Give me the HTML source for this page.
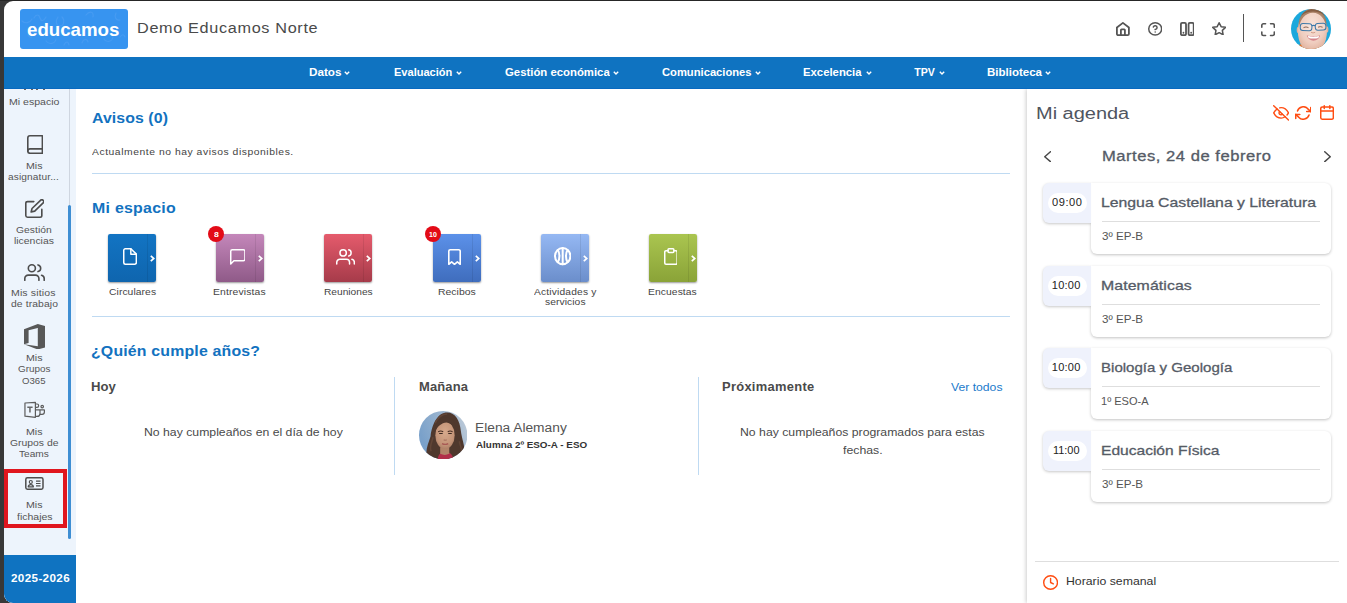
<!DOCTYPE html>
<html lang="es">
<head>
<meta charset="utf-8">
<title>Educamos</title>
<style>
*{box-sizing:border-box;margin:0;padding:0}
html,body{width:1347px;height:603px;overflow:hidden;background:#383838;font-family:"Liberation Sans",sans-serif;color:#4a4a4a}
.abs{position:absolute}
#win{position:absolute;left:4px;top:1px;width:1343px;height:602px;background:#fff;border-radius:9px 0 0 9px;overflow:hidden}
#logo{position:absolute;left:16px;top:8px;width:108px;height:40px;background:#3794f0;border-radius:3px;overflow:hidden}
#nav{position:absolute;left:0;top:56px;width:1343px;height:32px;background:#0f73c1;border-bottom:1px solid #0869c0}
.chev{position:absolute;top:70px;width:6px;height:4px;fill:none;stroke:#fff;stroke-width:1.400}
#side{position:absolute;left:0;top:88px;width:72px;height:514px;background:#edf4fc}
#side .trk{position:absolute;left:65px;top:0;width:1px;height:117px;background:#cfd6e0}
#side .thumb{position:absolute;left:64px;top:116px;width:3px;height:334px;background:#3e8ed3;border-radius:1.500px}
#year{position:absolute;left:0;top:466px;width:72px;height:48px;background:#0f73c1}
.ic{fill:none;stroke:#4d4d4d;stroke-width:1.700;stroke-linecap:round;stroke-linejoin:round}
.redbox{position:absolute;left:0;top:380px;width:63px;height:59px;border:4px solid #e0161e}
.hr{position:absolute;height:1px;background:#bfdaf2}
.tile{position:absolute;top:233px;width:48px;height:48px;border-radius:2px;box-shadow:0 1px 2px rgba(0,0,0,.4)}
.tile i{position:absolute;left:39px;top:0;width:1px;height:48px;background:rgba(0,0,0,.08)}
.tile .cv{position:absolute;left:42px;top:21px;width:5px;height:7px;fill:none;stroke:#fff;stroke-width:1.700}
.wi{position:absolute;fill:none;stroke:#fff;stroke-width:1.500;stroke-linecap:round;stroke-linejoin:round}
.badge{position:absolute;top:225px;width:16px;height:16px;border-radius:50%;background:#e30b17}
#rp{position:absolute;left:1023px;top:88px;width:320px;height:514px;background:#fff;box-shadow:-1px 0 4px rgba(0,0,0,.2);clip-path:inset(0 0 0 -8px)}
.tb{position:absolute;left:1038.500px;width:48.600px;height:40px;background:#eff2fc;border-radius:6px 0 0 6px;box-shadow:0 1px 3px rgba(0,0,0,.22);clip-path:inset(-6px 0 -6px -6px)}
.tb b{position:absolute;left:5.500px;top:10px;width:38.500px;height:20px;border-radius:10px;background:#fff}
.cd{position:absolute;left:1087.100px;width:240px;height:71px;background:#fff;border-radius:0 6px 6px 6px;box-shadow:0 1px 3px rgba(0,0,0,.24)}
.cd i{position:absolute;left:11px;top:38px;width:218px;height:1px;background:#dedede}
.oi{position:absolute;fill:none;stroke:#f4511e;stroke-width:1.900;stroke-linecap:round;stroke-linejoin:round}
.gi{position:absolute;fill:none;stroke:#555;stroke-width:2;stroke-linecap:round;stroke-linejoin:round}
</style>
</head>
<body>
<div style="position:absolute;left:0;top:0;width:1347px;height:1px;background:#262626"></div>
<div id="win">
  <div id="logo"><svg width="108" height="40" viewBox="0 0 108 40" fill="none" stroke="#469bf2" stroke-width="1.200" stroke-linecap="round"><path d="M2 12c3 3 8 2 10-2M14 9c2-4 5-4 6 0s4 3 6-1M38 8c-3 4-2 9 2 9s5-6 2-9M66 6c4-5 8-3 7 2M96 4c-2 4 0 8 4 7M8 26c2 4 5 2 5-1s3-3 4 0M26 32c3 4 9 3 10-2M44 36c2-4 4-4 5 0M62 34c1-4 5-5 6-1M84 30c2 4 8 3 9-2M100 28c2-3 4-3 5 0"/></svg></div>
  <svg class="abs" style="left:1112.10px;top:20.80px" width="13.80" height="14.00" viewBox="1.650 0.525 20.700 22.951" preserveAspectRatio="none" fill="none" stroke="#555" stroke-width="1.8" stroke-linecap="round" stroke-linejoin="round" ><g style="vector-effect:non-scaling-stroke"><path vector-effect="non-scaling-stroke" d="M3 9.5l9-7.5 9 7.5V20a2 2 0 0 1-2 2H5a2 2 0 0 1-2-2z"/><path vector-effect="non-scaling-stroke" d="M9 22v-8.500a1 1 0 0 1 1-1h4a1 1 0 0 1 1 1V22"/></g></svg>
  <svg class="abs" style="left:1144.00px;top:20.90px" width="14.40" height="13.80" viewBox="0.837 0.780 22.326 22.439" preserveAspectRatio="none" fill="none" stroke="#555" stroke-width="1.5" stroke-linecap="round" stroke-linejoin="round" ><g style="vector-effect:non-scaling-stroke"><circle vector-effect="non-scaling-stroke" cx="12" cy="12" r="10"/><path vector-effect="non-scaling-stroke" d="M9.09 9a3 3 0 0 1 5.83 1c0 2-3 3-3 3"/><path vector-effect="non-scaling-stroke" d="M12 17h.01"/></g></svg>
  <svg class="abs" style="left:1175.80px;top:20.80px" width="14.60" height="14.10" viewBox="0.594 0.537 22.812 22.927" preserveAspectRatio="none" fill="none" stroke="#555" stroke-width="1.8" stroke-linecap="round" stroke-linejoin="round" ><g style="vector-effect:non-scaling-stroke"><rect vector-effect="non-scaling-stroke" x="2" y="2" width="8" height="20" rx="2"/><rect vector-effect="non-scaling-stroke" x="14" y="2" width="8" height="20" rx="2"/><path vector-effect="non-scaling-stroke" d="M6 18h.01M18 18h.01"/></g></svg>
  <svg class="abs" style="left:1207.90px;top:20.90px" width="14.30" height="13.50" viewBox="0.828 0.811 22.344 21.398" preserveAspectRatio="none" fill="none" stroke="#555" stroke-width="1.5" stroke-linecap="round" stroke-linejoin="round" ><g style="vector-effect:non-scaling-stroke"><path vector-effect="non-scaling-stroke" d="M12 2l3.09 6.26L22 9.27l-5 4.87 1.18 6.88L12 17.77l-6.18 3.25L7 14.14 2 9.27l6.91-1.01L12 2z"/></g></svg>
  <div class="abs" style="left:1238.800px;top:13px;width:1.300px;height:28px;background:#555"></div>
  <svg class="abs" style="left:1257.00px;top:22.30px" width="14.10" height="13.30" viewBox="0.720 0.632 22.560 22.735" preserveAspectRatio="none" fill="none" stroke="#555" stroke-width="1.6" stroke-linecap="round" stroke-linejoin="round" ><g style="vector-effect:non-scaling-stroke"><path vector-effect="non-scaling-stroke" d="M2 8V4.5A2.5 2.5 0 0 1 4.5 2H8M16 2h3.5A2.5 2.5 0 0 1 22 4.5V8M22 16v3.5a2.5 2.5 0 0 1-2.5 2.500H16M8 22H4.5A2.5 2.5 0 0 1 2 19.5V16"/></g></svg>
  <svg class="abs" style="left:1287px;top:8px" width="40" height="40" viewBox="0 0 40 40"><defs><clipPath id="c1"><circle cx="20" cy="20" r="20"/></clipPath><radialGradient id="fg" cx=".5" cy=".35" r=".7"><stop offset="0" stop-color="#f8e2d8"/><stop offset=".6" stop-color="#efcdbf"/><stop offset="1" stop-color="#dba890"/></radialGradient></defs><g clip-path="url(#c1)"><rect width="40" height="40" fill="#1ba8dc"/><path d="M4 40C6 36 10 34.500 15 34.500h12c5 0 8 1.500 10 5.500z" fill="#f0701e"/><ellipse cx="7.600" cy="21" rx="1.900" ry="3.300" fill="#e3b09b"/><ellipse cx="35.600" cy="20.500" rx="1.800" ry="3.200" fill="#e3b09b"/><ellipse cx="21.400" cy="22" rx="14.600" ry="22" fill="url(#fg)"/><path d="M7.800 19C6.500 8 13 -.5 22 -.5c8.500 0 14.500 7 13.400 19C34 10 29.500 4 22 3.800 14 4 9.500 10 7.800 19z" fill="#a47b5e" opacity=".9"/><path d="M10 7C13 2 18 0 22 0s9 2 12 7C30 3.500 26 2.500 22 2.500S14 3.500 10 7z" fill="#7a5238" opacity=".75"/><rect x="9.300" y="14.600" width="11.600" height="7" rx="2.600" fill="rgba(255,255,255,.18)" stroke="#3f7aa8" stroke-width="1.050" transform="rotate(3 15 18)"/><rect x="24.300" y="14.300" width="10.600" height="6.800" rx="2.600" fill="rgba(255,255,255,.18)" stroke="#3f7aa8" stroke-width="1.050" transform="rotate(-3 30 18)"/><path d="M20.800 16.800q1.800-.8 3.600 0" fill="none" stroke="#3a78ad" stroke-width="1.200"/><path d="M12.500 18.600q2.500-1.300 5 0M27 18.200q2.300-1.200 4.600 0" fill="none" stroke="#7d5a4a" stroke-width=".9"/><path d="M20 23.300q2 1.300 4.200 0" fill="none" stroke="#d39c88" stroke-width="1"/><path d="M15.800 26.300c3.300 1.400 9.800 1.400 13.200 0-1 6.800-11.400 7.400-13.200 0z" fill="#d6858a"/><path d="M16.800 26.800c3.200 1.200 8.200 1.200 11.300 0l-.7 2.100c-2.800.9-7 .9-9.800 0z" fill="#fff"/></g></svg>
  <div id="nav"></div>
  <svg class="chev" style="left:340.3px" viewBox="0 0 6 4"><path d="M.8 .7L3 2.900 5.200 .7"/></svg>
  <svg class="chev" style="left:451.7px" viewBox="0 0 6 4"><path d="M.8 .7L3 2.900 5.200 .7"/></svg>
  <svg class="chev" style="left:609.3px" viewBox="0 0 6 4"><path d="M.8 .7L3 2.900 5.200 .7"/></svg>
  <svg class="chev" style="left:750.7px" viewBox="0 0 6 4"><path d="M.8 .7L3 2.900 5.200 .7"/></svg>
  <svg class="chev" style="left:861.5px" viewBox="0 0 6 4"><path d="M.8 .7L3 2.900 5.200 .7"/></svg>
  <svg class="chev" style="left:934.7px" viewBox="0 0 6 4"><path d="M.8 .7L3 2.900 5.200 .7"/></svg>
  <svg class="chev" style="left:1041.4px" viewBox="0 0 6 4"><path d="M.8 .7L3 2.900 5.200 .7"/></svg>
  <div class="hr" style="left:88px;top:172px;width:918px"></div>
  <div class="hr" style="left:88px;top:315px;width:918px"></div>
  <div class="tile" style="left:104px;background:linear-gradient(#1274c3,#0f65ae)"><i></i><svg class="cv" viewBox="0 0 5 7"><path d="M.8 .8L3.800 3.500 .8 6.200"/></svg></div>
  <svg class="abs" style="left:118.50px;top:247.10px" width="14.10" height="16.90" viewBox="3.048 1.026 17.905 21.948" preserveAspectRatio="none" fill="none" stroke="#fff" stroke-width="1.5" stroke-linecap="round" stroke-linejoin="round" ><g style="vector-effect:non-scaling-stroke"><path vector-effect="non-scaling-stroke" d="M13 2H6a2 2 0 0 0-2 2v16a2 2 0 0 0 2 2h12a2 2 0 0 0 2-2V9z"/><path vector-effect="non-scaling-stroke" d="M13 2v7h7"/></g></svg>
  <div class="tile" style="left:212px;background:linear-gradient(#c487ba,#8f5a88)"><i></i><svg class="cv" viewBox="0 0 5 7"><path d="M.8 .8L3.800 3.500 .8 6.200"/></svg></div>
  <svg class="abs" style="left:225.50px;top:247.90px" width="15.70" height="15.70" viewBox="2.049 2.049 19.901 19.901" preserveAspectRatio="none" fill="none" stroke="#fff" stroke-width="1.5" stroke-linecap="round" stroke-linejoin="round" ><g style="vector-effect:non-scaling-stroke"><path vector-effect="non-scaling-stroke" d="M21 15a2 2 0 0 1-2 2H7l-4 4V5a2 2 0 0 1 2-2h14a2 2 0 0 1 2 2z"/></g></svg>
  <div class="tile" style="left:320px;background:linear-gradient(#e55b6c,#a63b4a)"><i></i><svg class="cv" viewBox="0 0 5 7"><path d="M.8 .8L3.800 3.500 .8 6.200"/></svg></div>
  <svg class="abs" style="left:331.90px;top:247.90px" width="19.10" height="15.70" viewBox="0.063 2.049 23.875 19.901" preserveAspectRatio="none" fill="none" stroke="#fff" stroke-width="1.5" stroke-linecap="round" stroke-linejoin="round" ><g style="vector-effect:non-scaling-stroke"><path vector-effect="non-scaling-stroke" d="M17 21v-2a4 4 0 0 0-4-4H5a4 4 0 0 0-4 4v2"/><circle vector-effect="non-scaling-stroke" cx="9" cy="7" r="4"/><path vector-effect="non-scaling-stroke" d="M23 21v-2a4 4 0 0 0-3-3.87"/><path vector-effect="non-scaling-stroke" d="M16 3.13a4 4 0 0 1 0 7.75"/></g></svg>
  <div class="tile" style="left:429px;background:linear-gradient(#5c91e9,#3f6dbd)"><i></i><svg class="cv" viewBox="0 0 5 7"><path d="M.8 .8L3.800 3.500 .8 6.200"/></svg></div>
  <svg class="abs" style="left:444.00px;top:247.90px" width="13.00" height="16.10" viewBox="1.158 1.062 13.684 18.876" preserveAspectRatio="none" fill="none" stroke="#fff" stroke-width="1.6" stroke-linecap="round" stroke-linejoin="round" ><g style="vector-effect:non-scaling-stroke"><path vector-effect="non-scaling-stroke" d="M2 19V3.5A1.5 1.5 0 0 1 3.5 2h9A1.5 1.5 0 0 1 14 3.5V19l-3-2.800-3 2.800-3-2.800z"/></g></svg>
  <div class="tile" style="left:537px;background:linear-gradient(#95b8f3,#6b8ecb)"><i></i><svg class="cv" viewBox="0 0 5 7"><path d="M.8 .8L3.800 3.500 .8 6.200"/></svg></div>
  <svg class="abs" style="left:549.60px;top:246.40px" width="17.40" height="18.20" viewBox="0.266 0.327 21.468 21.346" preserveAspectRatio="none" fill="none" stroke="#fff" stroke-width="2.0" stroke-linecap="round" stroke-linejoin="round" ><g style="vector-effect:non-scaling-stroke"><circle vector-effect="non-scaling-stroke" cx="11" cy="11" r="9.500"/><path vector-effect="non-scaling-stroke" d="M11 1.500v19M5 3.800c2.600 3.600 2.600 10.800 0 14.400M17 3.800c-2.600 3.600-2.600 10.800 0 14.400"/></g></svg>
  <div class="tile" style="left:645px;background:linear-gradient(#aac550,#8aa338)"><i></i><svg class="cv" viewBox="0 0 5 7"><path d="M.8 .8L3.800 3.500 .8 6.200"/></svg></div>
  <svg class="abs" style="left:659.60px;top:247.10px" width="13.90" height="16.90" viewBox="0.593 0.575 16.815 20.851" preserveAspectRatio="none" fill="none" stroke="#fff" stroke-width="1.5" stroke-linecap="round" stroke-linejoin="round" ><g style="vector-effect:non-scaling-stroke"><path vector-effect="non-scaling-stroke" d="M12.500 4H15a1.500 1.500 0 0 1 1.500 1.500V19a1.500 1.500 0 0 1-1.500 1.500H3A1.500 1.500 0 0 1 1.500 19V5.500A1.500 1.500 0 0 1 3 4h2.500"/><rect vector-effect="non-scaling-stroke" x="5.500" y="1.500" width="7" height="4.500" rx="1"/></g></svg>
  <div class="badge" style="left:204px"></div>
  <div class="badge" style="left:421.100px"></div>
  <div class="abs" style="left:390px;top:376px;width:1px;height:98px;background:#bfdaf2"></div>
  <div class="abs" style="left:694px;top:376px;width:1px;height:98px;background:#bfdaf2"></div>
  <svg class="abs" style="left:414.800px;top:409.800px" width="48.400" height="48.400" viewBox="0 0 48 48"><defs><clipPath id="c2"><circle cx="24" cy="24" r="24"/></clipPath><linearGradient id="g2" x1="0" y1=".4" x2="1" y2="0"><stop offset="0" stop-color="#7aa1ca"/><stop offset=".55" stop-color="#9db6d0"/><stop offset="1" stop-color="#c4cfda"/></linearGradient><radialGradient id="fg2" cx=".5" cy=".4" r=".65"><stop offset="0" stop-color="#d6a98c"/><stop offset=".7" stop-color="#c49478"/><stop offset="1" stop-color="#a87a62"/></radialGradient></defs><g clip-path="url(#c2)"><rect width="48" height="48" fill="url(#g2)"/><path d="M9 48C5 41 9 33 11.500 25 13 12 19 1.500 28 1.500c8 0 12.500 8 13.500 18 1 9 5.500 18 3.500 28.500z" fill="#4f382d"/><path d="M12 40c-2-5 1-10 2-14M40 30c1 5 3 9 3 14M16 12c3-6 8-9 12-9" stroke="#6a4a3a" stroke-width="1.500" fill="none" opacity=".7"/><path d="M18.500 48c.5-5 3.500-7.500 7.500-7.500s7.500 2.500 8 7.500z" fill="#b12f49"/><path d="M21 36h9v6.500c-3 1.500-6 1.500-9 0z" fill="#b28469"/><ellipse cx="25.800" cy="24" rx="9.600" ry="13.600" fill="url(#fg2)"/><path d="M15.800 21C15.500 12 20 6.500 27 6.500c6.500 0 9.800 5 9.800 13.500-1.500-4.500-4-7.500-9.500-8.500-5 .5-9 3.500-11.500 9.500z" fill="#4f382d"/><path d="M19 20.500q2.500-1.300 5 0M28.500 20.500q2.300-1.300 4.800 0" stroke="#4a3026" stroke-width="1.100" fill="none"/><path d="M20 22.300h3.500M29 22.300h3.500" stroke="#3a2820" stroke-width="1.200"/><path d="M24.500 28.500q1.500 1 3 0" stroke="#a87460" stroke-width="1" fill="none"/><path d="M22.800 32.300c1.800.9 4.600.9 6.200 0" stroke="#a85a55" stroke-width="1.400" fill="none"/></g></svg>
  <div id="rp"></div>
  <svg class="abs" style="left:1269.00px;top:104.00px" width="16.20" height="15.80" viewBox="-0.041 -0.069 24.081 24.139" preserveAspectRatio="none" fill="none" stroke="#ff4d12" stroke-width="1.4" stroke-linecap="round" stroke-linejoin="round" ><g style="vector-effect:non-scaling-stroke"><path vector-effect="non-scaling-stroke" d="M17.94 17.94A10.07 10.07 0 0 1 12 20c-7 0-11-8-11-8a18.45 18.45 0 0 1 5.06-5.94M9.9 4.24A9.12 9.12 0 0 1 12 4c7 0 11 8 11 8a18.5 18.5 0 0 1-2.16 3.19m-6.72-1.07a3 3 0 1 1-4.24-4.24"/><path vector-effect="non-scaling-stroke" d="M1 1l22 22"/></g></svg>
  <svg class="abs" style="left:1290.80px;top:104.80px" width="16.50" height="14.00" viewBox="-0.100 1.920 24.200 20.160" preserveAspectRatio="none" fill="none" stroke="#ff4d12" stroke-width="1.5" stroke-linecap="round" stroke-linejoin="round" ><g style="vector-effect:non-scaling-stroke"><path vector-effect="non-scaling-stroke" d="M23 4v6h-6"/><path vector-effect="non-scaling-stroke" d="M1 20v-6h6"/><path vector-effect="non-scaling-stroke" d="M3.51 9a9 9 0 0 1 14.85-3.36L23 10M1 14l4.64 4.36A9 9 0 0 0 20.49 15"/></g></svg>
  <svg class="abs" style="left:1316.30px;top:104.40px" width="14.10" height="14.90" viewBox="1.929 0.881 20.143 22.239" preserveAspectRatio="none" fill="none" stroke="#ff4d12" stroke-width="1.5" stroke-linecap="round" stroke-linejoin="round" ><g style="vector-effect:non-scaling-stroke"><rect vector-effect="non-scaling-stroke" x="3" y="4" width="18" height="18" rx="2" ry="2"/><path vector-effect="non-scaling-stroke" d="M16 2v4M8 2v4M3 10h18"/></g></svg>
  <svg class="abs" style="left:1039.80px;top:149.70px" width="7.20" height="11.40" viewBox="-0.789 -0.909 7.579 13.818" preserveAspectRatio="none" fill="none" stroke="#4a4a4a" stroke-width="1.5" stroke-linecap="round" stroke-linejoin="round" ><g style="vector-effect:non-scaling-stroke"><path vector-effect="non-scaling-stroke" d="M6 0L0 6l6 6"/></g></svg>
  <svg class="abs" style="left:1320.00px;top:149.70px" width="7.00" height="11.40" viewBox="-0.818 -0.909 7.636 13.818" preserveAspectRatio="none" fill="none" stroke="#4a4a4a" stroke-width="1.5" stroke-linecap="round" stroke-linejoin="round" ><g style="vector-effect:non-scaling-stroke"><path vector-effect="non-scaling-stroke" d="M0 0l6 6-6 6"/></g></svg>
  <div class="cd" style="top:182.0px"><i></i></div>
  <div class="tb" style="top:182.0px"><b></b></div>
  <div class="cd" style="top:265.0px"><i></i></div>
  <div class="tb" style="top:265.0px"><b></b></div>
  <div class="cd" style="top:347.0px"><i></i></div>
  <div class="tb" style="top:347.0px"><b></b></div>
  <div class="cd" style="top:430.0px"><i></i></div>
  <div class="tb" style="top:430.0px"><b></b></div>
  <div class="abs" style="left:1031.300px;top:560px;width:303.500px;height:1px;background:#dedede"></div>
  <svg class="abs" style="left:1039.20px;top:574.20px" width="15.20" height="15.00" viewBox="0.986 0.971 22.029 22.059" preserveAspectRatio="none" fill="none" stroke="#ff4d12" stroke-width="1.4" stroke-linecap="round" stroke-linejoin="round" ><g style="vector-effect:non-scaling-stroke"><circle vector-effect="non-scaling-stroke" cx="12" cy="12" r="10"/><path vector-effect="non-scaling-stroke" d="M12 6v6l4 2"/></g></svg>
  <div id="side">
    <div class="trk"></div><div class="thumb"></div>
    <div class="abs" style="left:19.9px;top:0;width:2px;height:1.300px;background:#6b625c"></div>
    <div class="abs" style="left:27.3px;top:0;width:2px;height:1.300px;background:#6b625c"></div>
    <div class="abs" style="left:31.8px;top:0;width:2px;height:1.300px;background:#6b625c"></div>
    <div class="abs" style="left:39.0px;top:0;width:2px;height:1.300px;background:#6b625c"></div>
    <svg class="abs" style="left:22.50px;top:45.70px" width="16.20" height="19.10" viewBox="3.123 1.086 17.753 21.829" preserveAspectRatio="none" fill="none" stroke="#4d4d4d" stroke-width="1.6" stroke-linecap="round" stroke-linejoin="round" ><g style="vector-effect:non-scaling-stroke"><path vector-effect="non-scaling-stroke" d="M4 19.5A2.5 2.5 0 0 1 6.5 17H20"/><path vector-effect="non-scaling-stroke" d="M6.5 2H20v20H6.5A2.5 2.5 0 0 1 4 19.5v-15A2.5 2.5 0 0 1 6.5 2z"/></g></svg>
    <svg class="abs" style="left:20.90px;top:109.60px" width="19.50" height="19.00" viewBox="1.102 0.976 21.897 21.948" preserveAspectRatio="none" fill="none" stroke="#4d4d4d" stroke-width="1.6" stroke-linecap="round" stroke-linejoin="round" ><g style="vector-effect:non-scaling-stroke"><path vector-effect="non-scaling-stroke" d="M11 4H4a2 2 0 0 0-2 2v14a2 2 0 0 0 2 2h14a2 2 0 0 0 2-2v-7"/><path vector-effect="non-scaling-stroke" d="M18.5 2.5a2.121 2.121 0 0 1 3 3L12 15l-4 1 1-4 9.5-9.5z"/></g></svg>
    <svg class="abs" style="left:20.00px;top:175.10px" width="21.00" height="17.10" viewBox="0.093 2.071 23.814 19.858" preserveAspectRatio="none" fill="none" stroke="#4d4d4d" stroke-width="1.6" stroke-linecap="round" stroke-linejoin="round" ><g style="vector-effect:non-scaling-stroke"><path vector-effect="non-scaling-stroke" d="M17 21v-2a4 4 0 0 0-4-4H5a4 4 0 0 0-4 4v2"/><circle vector-effect="non-scaling-stroke" cx="9" cy="7" r="4"/><path vector-effect="non-scaling-stroke" d="M23 21v-2a4 4 0 0 0-3-3.87"/><path vector-effect="non-scaling-stroke" d="M16 3.13a4 4 0 0 1 0 7.75"/></g></svg>
    <svg class="abs" style="left:20px;top:234.700px" width="21" height="25.500" viewBox="0 0 21 25.500"><path fill-rule="evenodd" d="M0 20.300V5.200L13.800 0 21 2.100v21.300l-7.200 2.100L0 20.300zM13.800 22.200V4.100L4.600 6.300v12.600l-4.600 1.400z" fill="#585858"/></svg>
    <svg class="abs" style="left:20px;top:312px" width="22" height="18" viewBox="0 0 22 18" fill="none" stroke="#5c5c5c" stroke-width="1.200" stroke-linejoin="round"><path d="M.95 2L11.400 1.400V16.300L.95 15.200z"/><path d="M3.300 6.200h5.300M5.950 6.200v5.300" stroke-width="1.500" stroke="#666"/><path d="M11.400 3h1.600a1.650 1.650 0 0 1 0 3.300h-1.600"/><circle cx="18.200" cy="5.600" r="1.250"/><path d="M11.400 8.800h9.200M16 8.800v3.600a3 3 0 0 1-3 3h-1.600M20.400 8.800v2.300a2.300 2.300 0 0 1-2.300 2.300H16.300"/></svg>
    <div class="redbox"></div>
    <svg class="abs" style="left:21.200px;top:387.700px" width="18.800" height="13" viewBox="0 0 18.800 13" fill="none" stroke="#4d4d4d" stroke-width="1.500" stroke-linejoin="round"><rect x=".8" y=".8" width="17.200" height="11.400" rx="1.600"/><circle cx="5.800" cy="5" r="1.500" stroke-width="1.200"/><path d="M3.200 9.800c.2-1.600 1.200-2.200 2.600-2.200s2.400.6 2.600 2.200z" stroke-width="1.200"/><path d="M11 4.200h4.500M11 6.500h4.500M11 8.800h4.500" stroke-width="1.200"/></svg>
    <div id="year"></div>
  </div>
<div class="abs" style="left:22.60px;top:19.42px;color:#fff;font-size:19px;line-height:19px;font-weight:bold;white-space:nowrap;letter-spacing:0.000px;transform-origin:0 0;transform:scaleX(0.9829);">educamos</div>
<div class="abs" style="left:132.50px;top:20.72px;color:#4a4a4a;font-size:13.8px;line-height:13.8px;font-weight:normal;white-space:nowrap;letter-spacing:0.562px;transform-origin:0 0;transform:scaleX(1.1767);">Demo Educamos Norte</div>
<div class="abs" style="left:304.50px;top:66.23px;color:#fff;font-size:10.6px;line-height:10.6px;font-weight:bold;white-space:nowrap;letter-spacing:0.000px;transform-origin:0 0;transform:scaleX(1.1046);">Datos</div>
<div class="abs" style="left:389.50px;top:66.23px;color:#fff;font-size:10.6px;line-height:10.6px;font-weight:bold;white-space:nowrap;letter-spacing:0.000px;transform-origin:0 0;transform:scaleX(1.0429);">Evaluación</div>
<div class="abs" style="left:500.50px;top:66.23px;color:#fff;font-size:10.6px;line-height:10.6px;font-weight:bold;white-space:nowrap;letter-spacing:0.000px;transform-origin:0 0;transform:scaleX(1.0714);">Gestión económica</div>
<div class="abs" style="left:657.60px;top:66.23px;color:#fff;font-size:10.6px;line-height:10.6px;font-weight:bold;white-space:nowrap;letter-spacing:0.000px;transform-origin:0 0;transform:scaleX(1.0565);">Comunicaciones</div>
<div class="abs" style="left:798.70px;top:66.23px;color:#fff;font-size:10.6px;line-height:10.6px;font-weight:bold;white-space:nowrap;letter-spacing:0.000px;transform-origin:0 0;transform:scaleX(1.0693);">Excelencia</div>
<div class="abs" style="left:910.20px;top:66.23px;color:#fff;font-size:10.6px;line-height:10.6px;font-weight:bold;white-space:nowrap;letter-spacing:0.000px;transform-origin:0 0;transform:scaleX(1.0000);">TPV</div>
<div class="abs" style="left:982.60px;top:66.23px;color:#fff;font-size:10.6px;line-height:10.6px;font-weight:bold;white-space:nowrap;letter-spacing:0.000px;transform-origin:0 0;transform:scaleX(1.0868);">Biblioteca</div>
<div class="abs" style="left:4.60px;top:96.65px;color:#555;font-size:8.8px;line-height:8.8px;font-weight:normal;white-space:nowrap;letter-spacing:0.000px;transform-origin:0 0;transform:scaleX(1.2007);">Mi espacio</div>
<div class="abs" style="left:21.50px;top:161.25px;color:#555;font-size:8.8px;line-height:8.8px;font-weight:normal;white-space:nowrap;letter-spacing:0.000px;transform-origin:0 0;transform:scaleX(1.2100);">Mis</div>
<div class="abs" style="left:4.30px;top:171.55px;color:#555;font-size:8.8px;line-height:8.8px;font-weight:normal;white-space:nowrap;letter-spacing:0.096px;transform-origin:0 0;transform:scaleX(1.1528);">asignatur...</div>
<div class="abs" style="left:12.20px;top:224.75px;color:#555;font-size:8.8px;line-height:8.8px;font-weight:normal;white-space:nowrap;letter-spacing:0.042px;transform-origin:0 0;transform:scaleX(1.1702);">Gestión</div>
<div class="abs" style="left:10.10px;top:235.55px;color:#555;font-size:8.8px;line-height:8.8px;font-weight:normal;white-space:nowrap;letter-spacing:0.000px;transform-origin:0 0;transform:scaleX(1.1824);">licencias</div>
<div class="abs" style="left:7.40px;top:288.45px;color:#555;font-size:8.8px;line-height:8.8px;font-weight:normal;white-space:nowrap;letter-spacing:0.105px;transform-origin:0 0;transform:scaleX(1.1965);">Mis sitios</div>
<div class="abs" style="left:6.80px;top:299.45px;color:#555;font-size:8.8px;line-height:8.8px;font-weight:normal;white-space:nowrap;letter-spacing:0.083px;transform-origin:0 0;transform:scaleX(1.1775);">de trabajo</div>
<div class="abs" style="left:21.50px;top:352.65px;color:#555;font-size:8.8px;line-height:8.8px;font-weight:normal;white-space:nowrap;letter-spacing:0.000px;transform-origin:0 0;transform:scaleX(1.2100);">Mis</div>
<div class="abs" style="left:13.70px;top:363.95px;color:#555;font-size:8.8px;line-height:8.8px;font-weight:normal;white-space:nowrap;letter-spacing:0.000px;transform-origin:0 0;transform:scaleX(1.1242);">Grupos</div>
<div class="abs" style="left:18.40px;top:375.55px;color:#555;font-size:8.8px;line-height:8.8px;font-weight:normal;white-space:nowrap;letter-spacing:0.000px;transform-origin:0 0;transform:scaleX(1.0914);">O365</div>
<div class="abs" style="left:21.50px;top:426.85px;color:#555;font-size:8.8px;line-height:8.8px;font-weight:normal;white-space:nowrap;letter-spacing:0.000px;transform-origin:0 0;transform:scaleX(1.2100);">Mis</div>
<div class="abs" style="left:6.30px;top:438.15px;color:#555;font-size:8.8px;line-height:8.8px;font-weight:normal;white-space:nowrap;letter-spacing:0.000px;transform-origin:0 0;transform:scaleX(1.1807);">Grupos de</div>
<div class="abs" style="left:15.40px;top:449.35px;color:#555;font-size:8.8px;line-height:8.8px;font-weight:normal;white-space:nowrap;letter-spacing:0.000px;transform-origin:0 0;transform:scaleX(1.1542);">Teams</div>
<div class="abs" style="left:21.50px;top:499.75px;color:#555;font-size:8.8px;line-height:8.8px;font-weight:normal;white-space:nowrap;letter-spacing:0.000px;transform-origin:0 0;transform:scaleX(1.2100);">Mis</div>
<div class="abs" style="left:12.50px;top:511.85px;color:#555;font-size:8.8px;line-height:8.8px;font-weight:normal;white-space:nowrap;letter-spacing:0.000px;transform-origin:0 0;transform:scaleX(1.1935);">fichajes</div>
<div class="abs" style="left:6.60px;top:572.23px;color:#fff;font-size:10.6px;line-height:10.6px;font-weight:bold;white-space:nowrap;letter-spacing:0.330px;transform-origin:0 0;transform:scaleX(1.1000);">2025-2026</div>
<div class="abs" style="left:88.20px;top:110.18px;color:#1272c0;font-size:14.2px;line-height:14.2px;font-weight:bold;white-space:nowrap;letter-spacing:0.075px;transform-origin:0 0;transform:scaleX(1.1171);">Avisos (0)</div>
<div class="abs" style="left:88.20px;top:146.75px;color:#444;font-size:8.8px;line-height:8.8px;font-weight:normal;white-space:nowrap;letter-spacing:0.457px;transform-origin:0 0;transform:scaleX(1.1771);">Actualmente no hay avisos disponibles.</div>
<div class="abs" style="left:88.30px;top:200.18px;color:#1272c0;font-size:14.2px;line-height:14.2px;font-weight:bold;white-space:nowrap;letter-spacing:0.246px;transform-origin:0 0;transform:scaleX(1.1200);">Mi espacio</div>
<div class="abs" style="left:104.70px;top:286.72px;color:#444;font-size:8.6px;line-height:8.6px;font-weight:normal;white-space:nowrap;letter-spacing:0.064px;transform-origin:0 0;transform:scaleX(1.1980);">Circulares</div>
<div class="abs" style="left:209.30px;top:286.72px;color:#444;font-size:8.6px;line-height:8.6px;font-weight:normal;white-space:nowrap;letter-spacing:0.115px;transform-origin:0 0;transform:scaleX(1.2055);">Entrevistas</div>
<div class="abs" style="left:319.70px;top:286.72px;color:#444;font-size:8.6px;line-height:8.6px;font-weight:normal;white-space:nowrap;letter-spacing:0.000px;transform-origin:0 0;transform:scaleX(1.1857);">Reuniones</div>
<div class="abs" style="left:433.60px;top:286.72px;color:#444;font-size:8.6px;line-height:8.6px;font-weight:normal;white-space:nowrap;letter-spacing:-0.000px;transform-origin:0 0;transform:scaleX(1.2145);">Recibos</div>
<div class="abs" style="left:529.70px;top:286.72px;color:#444;font-size:8.6px;line-height:8.6px;font-weight:normal;white-space:nowrap;letter-spacing:0.157px;transform-origin:0 0;transform:scaleX(1.1876);">Actividades y</div>
<div class="abs" style="left:540.60px;top:297.22px;color:#444;font-size:8.6px;line-height:8.6px;font-weight:normal;white-space:nowrap;letter-spacing:0.051px;transform-origin:0 0;transform:scaleX(1.1977);">servicios</div>
<div class="abs" style="left:644.10px;top:286.72px;color:#444;font-size:8.6px;line-height:8.6px;font-weight:normal;white-space:nowrap;letter-spacing:0.064px;transform-origin:0 0;transform:scaleX(1.2001);">Encuestas</div>
<div class="abs" style="left:209.90px;top:229.65px;color:#fff;font-size:7.5px;line-height:7.5px;font-weight:bold;white-space:nowrap;letter-spacing:0.000px;transform-origin:0 0;transform:scaleX(1.1520);">8</div>
<div class="abs" style="left:424.90px;top:229.65px;color:#fff;font-size:7.5px;line-height:7.5px;font-weight:bold;white-space:nowrap;letter-spacing:0.000px;transform-origin:0 0;transform:scaleX(0.9339);">10</div>
<div class="abs" style="left:87.20px;top:343.18px;color:#1272c0;font-size:14.2px;line-height:14.2px;font-weight:bold;white-space:nowrap;letter-spacing:0.157px;transform-origin:0 0;transform:scaleX(1.1187);">¿Quién cumple años?</div>
<div class="abs" style="left:87.40px;top:379.20px;color:#4a4a4a;font-size:13px;line-height:13px;font-weight:bold;white-space:nowrap;letter-spacing:0.000px;transform-origin:0 0;transform:scaleX(1.0090);">Hoy</div>
<div class="abs" style="left:415.20px;top:379.00px;color:#4a4a4a;font-size:13px;line-height:13px;font-weight:bold;white-space:nowrap;letter-spacing:0.160px;transform-origin:0 0;transform:scaleX(0.9959);">Mañana</div>
<div class="abs" style="left:718.20px;top:379.00px;color:#4a4a4a;font-size:13px;line-height:13px;font-weight:bold;white-space:nowrap;letter-spacing:0.300px;transform-origin:0 0;transform:scaleX(0.9924);">Próximamente</div>
<div class="abs" style="left:946.70px;top:381.90px;color:#1a7acb;font-size:10.4px;line-height:10.4px;font-weight:normal;white-space:nowrap;letter-spacing:0.000px;transform-origin:0 0;transform:scaleX(1.1728);">Ver todos</div>
<div class="abs" style="left:139.70px;top:426.60px;color:#4a4a4a;font-size:10.4px;line-height:10.4px;font-weight:normal;white-space:nowrap;letter-spacing:0.000px;transform-origin:0 0;transform:scaleX(1.1786);">No hay cumpleaños en el día de hoy</div>
<div class="abs" style="left:735.70px;top:426.60px;color:#4a4a4a;font-size:10.4px;line-height:10.4px;font-weight:normal;white-space:nowrap;letter-spacing:0.009px;transform-origin:0 0;transform:scaleX(1.1776);">No hay cumpleaños programados para estas</div>
<div class="abs" style="left:839.20px;top:444.60px;color:#4a4a4a;font-size:10.4px;line-height:10.4px;font-weight:normal;white-space:nowrap;letter-spacing:0.000px;transform-origin:0 0;transform:scaleX(1.1820);">fechas.</div>
<div class="abs" style="left:471.20px;top:421.29px;color:#555;font-size:12.3px;line-height:12.3px;font-weight:normal;white-space:nowrap;letter-spacing:0.000px;transform-origin:0 0;transform:scaleX(1.1186);">Elena Alemany</div>
<div class="abs" style="left:472.20px;top:439.61px;color:#333;font-size:9.2px;line-height:9.2px;font-weight:bold;white-space:nowrap;letter-spacing:-0.000px;transform-origin:0 0;transform:scaleX(1.0731);">Alumna 2º ESO-A - ESO</div>
<div class="abs" style="left:1032.00px;top:103.66px;color:#4f5560;font-size:17.3px;line-height:17.3px;font-weight:normal;white-space:nowrap;letter-spacing:0.000px;transform-origin:0 0;transform:scaleX(1.1550);">Mi agenda</div>
<div class="abs" style="left:1098.30px;top:148.45px;color:#555b66;font-size:14px;line-height:14px;font-weight:normal;white-space:nowrap;letter-spacing:0.447px;transform-origin:0 0;transform:scaleX(1.1835);-webkit-text-stroke:.3px currentColor;">Martes, 24 de febrero</div>
<div class="abs" style="left:1047.90px;top:196.49px;color:#222;font-size:11px;line-height:11px;font-weight:normal;white-space:nowrap;letter-spacing:0.550px;transform-origin:0 0;transform:scaleX(1.0067);">09:00</div>
<div class="abs" style="left:1096.90px;top:195.07px;color:#555b66;font-size:13.5px;line-height:13.5px;font-weight:normal;white-space:nowrap;letter-spacing:0.000px;transform-origin:0 0;transform:scaleX(1.1694);-webkit-text-stroke:.3px currentColor;">Lengua Castellana y Literatura</div>
<div class="abs" style="left:1097.90px;top:230.58px;color:#555;font-size:10.3px;line-height:10.3px;font-weight:normal;white-space:nowrap;letter-spacing:0.000px;transform-origin:0 0;transform:scaleX(1.1278);">3º EP-B</div>
<div class="abs" style="left:1047.80px;top:279.49px;color:#222;font-size:11px;line-height:11px;font-weight:normal;white-space:nowrap;letter-spacing:0.250px;transform-origin:0 0;transform:scaleX(1.0000);">10:00</div>
<div class="abs" style="left:1096.90px;top:278.07px;color:#555b66;font-size:13.5px;line-height:13.5px;font-weight:normal;white-space:nowrap;letter-spacing:0.085px;transform-origin:0 0;transform:scaleX(1.1734);-webkit-text-stroke:.3px currentColor;">Matemáticas</div>
<div class="abs" style="left:1097.90px;top:313.58px;color:#555;font-size:10.3px;line-height:10.3px;font-weight:normal;white-space:nowrap;letter-spacing:0.000px;transform-origin:0 0;transform:scaleX(1.1278);">3º EP-B</div>
<div class="abs" style="left:1047.80px;top:361.49px;color:#222;font-size:11px;line-height:11px;font-weight:normal;white-space:nowrap;letter-spacing:0.250px;transform-origin:0 0;transform:scaleX(1.0000);">10:00</div>
<div class="abs" style="left:1096.90px;top:360.07px;color:#555b66;font-size:13.5px;line-height:13.5px;font-weight:normal;white-space:nowrap;letter-spacing:0.000px;transform-origin:0 0;transform:scaleX(1.1145);-webkit-text-stroke:.3px currentColor;">Biología y Geología</div>
<div class="abs" style="left:1096.90px;top:395.58px;color:#555;font-size:10.3px;line-height:10.3px;font-weight:normal;white-space:nowrap;letter-spacing:0.000px;transform-origin:0 0;transform:scaleX(1.0727);">1º ESO-A</div>
<div class="abs" style="left:1049.00px;top:444.49px;color:#222;font-size:11px;line-height:11px;font-weight:normal;white-space:nowrap;letter-spacing:0.000px;transform-origin:0 0;transform:scaleX(0.9926);">11:00</div>
<div class="abs" style="left:1096.90px;top:443.07px;color:#555b66;font-size:13.5px;line-height:13.5px;font-weight:normal;white-space:nowrap;letter-spacing:0.000px;transform-origin:0 0;transform:scaleX(1.1529);-webkit-text-stroke:.3px currentColor;">Educación Física</div>
<div class="abs" style="left:1097.90px;top:478.58px;color:#555;font-size:10.3px;line-height:10.3px;font-weight:normal;white-space:nowrap;letter-spacing:0.000px;transform-origin:0 0;transform:scaleX(1.1278);">3º EP-B</div>
<div class="abs" style="left:1062.40px;top:575.29px;color:#333;font-size:11px;line-height:11px;font-weight:normal;white-space:nowrap;letter-spacing:0.000px;transform-origin:0 0;transform:scaleX(1.1166);">Horario semanal</div>
</div>
</body>
</html>
